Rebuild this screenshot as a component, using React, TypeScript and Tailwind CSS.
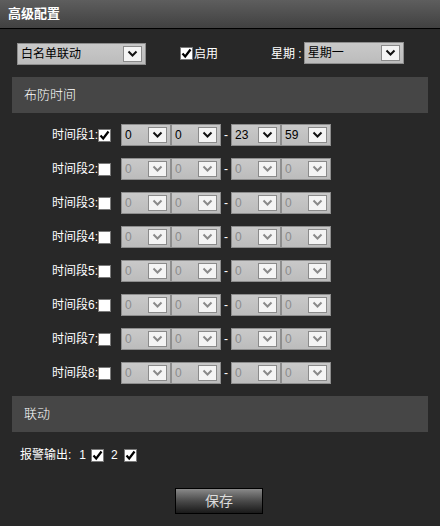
import { ReactNode } from "react";

const font = { fontFamily: '"Liberation Sans", "Noto Sans CJK SC", sans-serif' };

function Arrow({ disabled }: { disabled?: boolean }) {
  return (
    <div className="flex h-[16px] w-[19px] items-center justify-center border border-[#8a8a8a] bg-[#f4f4f4]">
      <svg width="11" height="8" viewBox="0 0 11 8">
        <path
          d="M1.5 1.5 L5.5 5.5 L9.5 1.5"
          fill="none"
          stroke={disabled ? "#8a8a8a" : "#111"}
          strokeWidth="2"
        />
      </svg>
    </div>
  );
}

function Select({ value, width, disabled }: { value: string; width: string; disabled?: boolean }) {
  return (
    <div
      className={`flex h-[22px] ${width} items-center justify-between border border-[#8e8e8e] bg-gradient-to-b from-[#c9c9c9] to-[#bcbcbc] pl-[3px] pr-[3px] text-[12px] ${
        disabled ? "text-[#8c8c8c]" : "text-black"
      }`}
    >
      <span className="leading-none">{value}</span>
      <Arrow disabled={disabled} />
    </div>
  );
}

function Check({ checked }: { checked?: boolean }) {
  return (
    <div className="flex h-[13px] w-[13px] items-center justify-center border border-[#7a7a7a] bg-white">
      {checked && (
        <svg width="11" height="11" viewBox="0 0 11 11">
          <path d="M1.5 5.5 L4.2 8.5 L9.5 1.5" fill="none" stroke="#000" strokeWidth="2.2" />
        </svg>
      )}
    </div>
  );
}

function SectionBar({ children }: { children: ReactNode }) {
  return (
    <div className="mx-[12px] flex h-[36px] items-center bg-[#464646] pl-[12px] text-[13px] font-light text-white">
      {children}
    </div>
  );
}

export default function App() {
  const rows = [1, 2, 3, 4, 5, 6, 7, 8];
  return (
    <div className="h-[526px] w-[440px] bg-[#282828] text-white" style={font}>
      <div className="flex h-[29px] items-center border-b border-black bg-gradient-to-b from-[#5e5e5e] to-[#414141] pl-[8px] text-[13px] font-bold">
        高级配置
      </div>

      <div className="flex h-[48px] items-center pl-[17px] pt-[1px]">
        <Select value="白名单联动" width="w-[129px]" />
        <div className="ml-[34px] flex items-center gap-[1px] text-[12px]">
          <Check checked />
          <span>启用</span>
        </div>
        <span className="ml-[53px] text-[12px]">星期 :</span>
        <div className="ml-[2px] -mt-[1px]">
          <Select value="星期一" width="w-[100px]" />
        </div>
      </div>

      <SectionBar>布防时间</SectionBar>

      <div className="mt-[11px] flex flex-col gap-[12px]">
        {rows.map((n) => {
          const on = n === 1;
          return (
            <div key={n} className="flex h-[22px] items-center">
              <span className="w-[98px] text-right text-[12px]">时间段{n}:</span>
              <Check checked={on} />
              <div className="ml-[10px] flex">
                <Select value="0" width="w-[50px]" disabled={!on} />
                <Select value="0" width="w-[50px]" disabled={!on} />
              </div>
              <span className="w-[10px] text-center text-[12px]">-</span>
              <div className="flex">
                <Select value={on ? "23" : "0"} width="w-[50px]" disabled={!on} />
                <Select value={on ? "59" : "0"} width="w-[50px]" disabled={!on} />
              </div>
            </div>
          );
        })}
      </div>

      <div className="mt-[12px]">
        <SectionBar>联动</SectionBar>
      </div>

      <div className="mt-[15px] flex h-[16px] items-center pl-[20px] text-[12px]">
        <span>报警输出:</span>
        <span className="ml-[8px]">1</span>
        <div className="ml-[5px]">
          <Check checked />
        </div>
        <span className="ml-[7px]">2</span>
        <div className="ml-[6px]">
          <Check checked />
        </div>
      </div>

      <div className="mt-[25px] flex justify-center pr-[2px]">
        <div className="flex h-[26px] w-[88px] items-center justify-center border border-black bg-gradient-to-b from-[#8a8a8a] via-[#4a4a4a] via-50% to-[#1a1a1a] text-[14px] text-[#dcdcdc]">
          保存
        </div>
      </div>
    </div>
  );
}
